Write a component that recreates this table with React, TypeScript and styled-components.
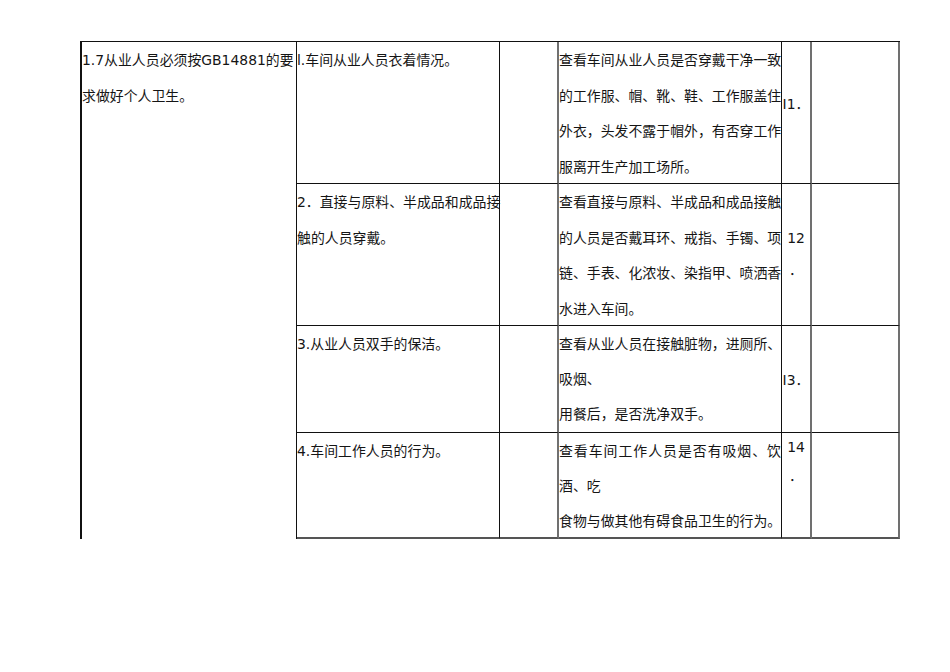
import React from "react";
import styled, { createGlobalStyle } from "styled-components";

const GlobalStyle = createGlobalStyle`
  html, body { margin: 0; padding: 0; background: #ffffff; }
  body {
    font-family: "DejaVu Sans", "Noto Sans CJK SC", sans-serif;
    color: #151515;
    font-size: 14px;
  }
`;

const Page = styled.div`
  width: 950px;
  height: 672px;
  padding: 41px 0 0 80px;
  box-sizing: border-box;
`;

const Grid = styled.div`
  display: grid;
  grid-template-columns: 217px 203px 59px 223px 30px 88px;
  grid-template-rows: 142px 142px 107px 106px;
  width: 820px;
  border-top: 1.5px solid #111;
  box-sizing: border-box;
`;

type CellProps = {
  $col: number;
  $row: number;
  $span?: number;
  $right: string;
  $bottom?: string;
  $left?: string;
  $center?: boolean;
  $padTop?: number;
};

const Cell = styled.div<CellProps>`
  grid-column: ${(p) => p.$col};
  grid-row: ${(p) => (p.$span ? `${p.$row} / span ${p.$span}` : p.$row)};
  box-sizing: border-box;
  border-right: ${(p) => p.$right};
  border-bottom: ${(p) => p.$bottom ?? "none"};
  border-left: ${(p) => p.$left ?? "none"};
  padding-top: ${(p) => p.$padTop ?? 1}px;
  text-align: ${(p) => (p.$center ? "center" : "left")};
  overflow: visible;
  min-width: 0;
`;

const Lines = styled.div<{ $lh: number }>`
  line-height: ${(p) => p.$lh}px;
  font-size: 13.9px;
`;

const Line = styled.div<{ $spread?: boolean }>`
  white-space: nowrap;
  ${(p) => (p.$spread ? "text-align: justify; text-align-last: justify;" : "")}
`;

const Num = styled.div<{ $lh: number }>`
  font-size: 13.9px;
  line-height: ${(p) => p.$lh}px;
  word-break: break-all;
`;

const BLACK = "1px solid #111";
const GREY = "2px solid #707070";
const BOTTOM_LAST = "2px solid #555";

type RowData = {
  item: string[];
  check: { text: string; spread?: boolean }[];
  checkLh: number;
  num: string[];
  numLh: number;
  numPad: number;
};

const rows: RowData[] = [
  {
    item: ["l.车间从业人员衣着情况。"],
    check: [
      { text: "查看车间从业人员是否穿戴干净一致" },
      { text: "的工作服、帽、靴、鞋、工作服盖住" },
      { text: "外衣，头发不露于帽外，有否穿工作" },
      { text: "服离开生产加工场所。" },
    ],
    checkLh: 35.5,
    num: ["I1．"],
    numLh: 35,
    numPad: 45,
  },
  {
    item: ["2．直接与原料、半成品和成品接", "触的人员穿戴。"],
    check: [
      { text: "查看直接与原料、半成品和成品接触" },
      { text: "的人员是否戴耳环、戒指、手镯、项" },
      { text: "链、手表、化浓妆、染指甲、喷洒香" },
      { text: "水进入车间。" },
    ],
    checkLh: 35.5,
    num: ["12", "．"],
    numLh: 32,
    numPad: 38,
  },
  {
    item: ["3.从业人员双手的保洁。"],
    check: [
      { text: "查看从业人员在接触脏物，进厕所、" },
      { text: "吸烟、" },
      { text: "用餐后，是否洗净双手。" },
    ],
    checkLh: 35,
    num: ["I3．"],
    numLh: 35,
    numPad: 37,
  },
  {
    item: ["4.车间工作人员的行为。"],
    check: [
      { text: "查看车间工作人员是否有吸烟、饮", spread: true },
      { text: "酒、吃" },
      { text: "食物与做其他有碍食品卫生的行为。" },
    ],
    checkLh: 35,
    num: ["14", "．"],
    numLh: 29,
    numPad: 0,
  },
];

export default function App() {
  return (
    <Page>
      <GlobalStyle />
      <Grid>
        <Cell $col={1} $row={1} $span={4} $left="2px solid #111" $right={BLACK}>
          <Lines $lh={35.5}>
            <Line>1.7从业人员必须按GB14881的要</Line>
            <Line>求做好个人卫生。</Line>
          </Lines>
        </Cell>
        {rows.map((r, i) => {
          const row = i + 1;
          const bottom = row === 4 ? BOTTOM_LAST : BLACK;
          return (
            <React.Fragment key={row}>
              <Cell $col={2} $row={row} $right={BLACK} $bottom={bottom}>
                <Lines $lh={35.5}>
                  {r.item.map((t) => (
                    <Line key={t}>{t}</Line>
                  ))}
                </Lines>
              </Cell>
              <Cell $col={3} $row={row} $right={GREY} $bottom={bottom} />
              <Cell $col={4} $row={row} $right={BLACK} $bottom={bottom}>
                <Lines $lh={r.checkLh}>
                  {r.check.map((c) => (
                    <Line key={c.text} $spread={c.spread}>
                      {c.text}
                    </Line>
                  ))}
                </Lines>
              </Cell>
              <Cell
                $col={5}
                $row={row}
                $right={GREY}
                $bottom={bottom}
                $center
                $padTop={r.numPad}
              >
                {r.num.map((n, j) => (
                  <Num key={j} $lh={r.numLh}>
                    {n}
                  </Num>
                ))}
              </Cell>
              <Cell $col={6} $row={row} $right={GREY} $bottom={bottom} />
            </React.Fragment>
          );
        })}
      </Grid>
    </Page>
  );
}
